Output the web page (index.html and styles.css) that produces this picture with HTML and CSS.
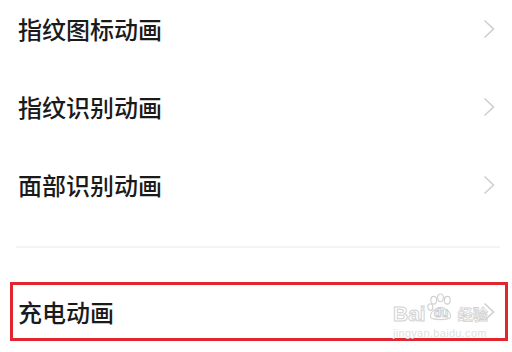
FILE: index.html
```html
<!DOCTYPE html>
<html lang="zh-CN">
<head>
  <meta charset="UTF-8" />
  <meta name="viewport" content="width=device-width, initial-scale=1.0" />
  <title>动画设置</title>
  <link rel="stylesheet" href="styles.css">
</head>

<body>
<main class="settings">
  <!-- Animation list -->
  <ul class="menu">
    <li class="menu-item">
      <span class="menu-label">指纹图标动画</span>
      <svg class="chevron" viewBox="0 0 12 20"><polyline points="1.5,1.5 10.5,10 1.5,18.5" /></svg>
    </li>
    <li class="menu-item">
      <span class="menu-label">指纹识别动画</span>
      <svg class="chevron" viewBox="0 0 12 20"><polyline points="1.5,1.5 10.5,10 1.5,18.5" /></svg>
    </li>
    <li class="menu-item">
      <span class="menu-label">面部识别动画</span>
      <svg class="chevron" viewBox="0 0 12 20"><polyline points="1.5,1.5 10.5,10 1.5,18.5" /></svg>
    </li>
  </ul>

  <div class="divider"></div>

  <!-- Highlighted item -->
  <div class="menu-item highlight">
    <span class="menu-label">充电动画</span>
    <svg class="chevron" viewBox="0 0 12 20"><polyline points="1.5,1.5 10.5,10 1.5,18.5" /></svg>

    <div class="watermark">
      <div class="wm-top">
        <span class="wm-bai">Bai</span>
        <span class="wm-paw">
          <svg viewBox="0 0 30 30">
            <ellipse cx="8" cy="7" rx="3" ry="4" />
            <ellipse cx="15" cy="4.5" rx="3" ry="4" />
            <ellipse cx="22" cy="7" rx="3" ry="4" />
            <ellipse cx="4.5" cy="14" rx="2.6" ry="3.4" />
            <path d="M7 26 C3 26 4 19 10 16 C13 14 17 14 20 16 C26 19 27 26 23 26 C19 27 11 27 7 26 Z" />
          </svg>
          <span class="wm-du">du</span>
        </span>
        <span class="wm-jy">经验</span>
      </div>
      <div class="wm-url">jingyan.baidu.com</div>
    </div>
  </div>
</main>
</body>
</html>
```

FILE: styles.css
```css
body {
  margin: 0;
  background-color: #ffffff;
  color: #1a1a1a;
  font-family: "Noto Sans CJK SC", "Noto Sans", sans-serif;
  overflow: hidden;
}

.settings {
  display: flex;
  flex-direction: column;
}

.menu {
  list-style: none;
  margin: -10px 0 0 0;
  padding: 0;
}

.menu-item {
  display: flex;
  align-items: center;
  justify-content: space-between;
  height: 78px;
  padding: 0 17px 0 18px;
}

.menu-label {
  font-size: 24px;
  font-weight: 500;
  line-height: 1;
}

.chevron {
  width: 12px;
  height: 20px;
  fill: none;
  stroke: #cfcfcf;
  stroke-width: 1.6;
}

.divider {
  height: 2px;
  margin: 22px 12px 0 16px;
  background-color: #f4f4f4;
}

.highlight {
  position: relative;
  height: 53px;
  margin: 34px 4px 0 10px;
  padding: 0 10px 0 5px;
  border: 3px solid #e0262f;
}

.watermark {
  position: absolute;
  left: 380px;
  top: 8px;
  display: flex;
  flex-direction: column;
  align-items: flex-start;
  color: #ffffff;
  font-family: "Liberation Sans", Arial, sans-serif;
}

.wm-top {
  display: flex;
  align-items: flex-end;
  height: 30px;
}

.wm-bai {
  font-size: 21px;
  font-weight: bold;
  line-height: 16px;
  margin-bottom: 1px;
  -webkit-text-stroke: 1px #d2d2d2;
}

.wm-paw {
  position: relative;
  width: 29px;
  height: 30px;
}

.wm-paw svg {
  width: 29px;
  height: 30px;
  fill: #ffffff;
  stroke: #d2d2d2;
  stroke-width: 1.2;
}

.wm-du {
  position: absolute;
  left: 8px;
  bottom: 3px;
  font-size: 12px;
  font-weight: bold;
  color: #ffffff;
  -webkit-text-stroke: 0.8px #c8c8c8;
}

.wm-jy {
  font-family: "Noto Sans CJK SC", sans-serif;
  font-size: 15px;
  font-weight: bold;
  line-height: 16px;
  margin-left: 3px;
  margin-bottom: 1px;
  -webkit-text-stroke: 0.8px #d2d2d2;
}

.wm-url {
  font-size: 11px;
  margin-top: 4px;
  color: #e0e0e0;
  letter-spacing: 0.3px;
}
```
